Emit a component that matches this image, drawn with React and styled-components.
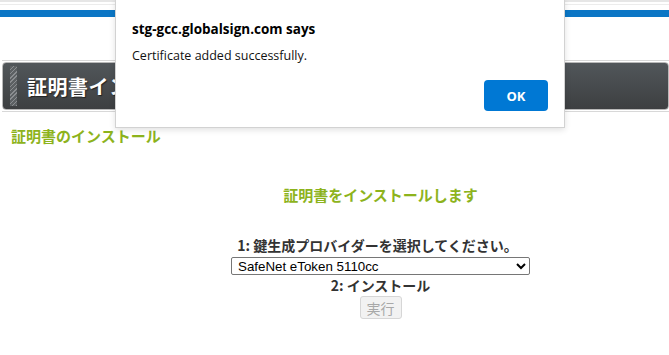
import React from "react";
import styled, { createGlobalStyle } from "styled-components";

const Global = createGlobalStyle`
  html, body { margin: 0; padding: 0; background: #fff; }
  body { font-family: "Noto Sans CJK JP", "Liberation Sans", sans-serif; }
`;

const Page = styled.div`
  position: relative;
  width: 669px;
  height: 355px;
  overflow: hidden;
  background: #fff;
`;

const TopStrip = styled.div`
  height: 2px;
  background: #e6e6e6;
  margin-bottom: 2px;
`;

const TopLine = styled.div`
  height: 1px;
  background: #ececec;
  margin-bottom: 5px;
`;

const BlueBar = styled.div`
  height: 7px;
  background: #0b76c5;
`;

const HeaderWrap = styled.div`
  margin: 43px 0 0 2px;
  border-top: 1px solid #d8d8d8;
  border-bottom: 1px solid #d8d8d8;
  padding: 1px 0;
`;

const HeaderBar = styled.div`
  display: flex;
  align-items: center;
  height: 46px;
  border-radius: 4px;
  border: 1px solid #b9b9b9;
  background: linear-gradient(#51565a, #3d3f41);
  padding-left: 7px;
  gap: 10px;
`;

const Stripe = styled.div`
  width: 7px;
  height: 40px;
  background: repeating-linear-gradient(
    -45deg,
    #8a8d90 0px,
    #8a8d90 1px,
    #5c6063 1px,
    #5c6063 3px
  );
`;

const HeaderTitle = styled.h1`
  margin: 0;
  color: #fff;
  font-size: 20px;
  font-weight: 700;
  letter-spacing: 0.5px;
  text-shadow: 1px 1px 1px #222;
`;

const SectionTitle = styled.h2`
  margin: 14px 0 0 11px;
  font-size: 15px;
  font-weight: 700;
  color: #8db31c;
  line-height: 20px;
`;

const Content = styled.div`
  display: flex;
  flex-direction: column;
  align-items: center;
  padding-left: 92px;
`;

const Lead = styled.h3`
  margin: 39px 0 0;
  font-size: 15px;
  font-weight: 700;
  color: #8db31c;
  line-height: 20px;
`;

const Step = styled.div`
  margin-top: ${(p) => p.$top || 0}px;
  font-size: 14px;
  font-weight: 700;
  color: #333;
  line-height: 16px;
  margin-left: ${(p) => p.$shift || 0}px;
`;

const Select = styled.select`
  width: 299px;
  height: 18px;
  margin-top: 4px;
  font-family: "Liberation Sans", Arial, sans-serif;
  font-size: 13.33px;
  color: #000;
  border: 1px solid #767676;
  border-radius: 2px;
  background: #fff;
  padding: 0 2px;
`;

const RunButton = styled.button`
  margin-top: 3px;
  width: 42px;
  height: 23px;
  padding: 0;
  font-family: "Noto Sans CJK JP", sans-serif;
  font-size: 14px;
  color: #a8a8a8;
  background: #f2f2f2;
  border: 1px solid #d6d6d6;
  border-radius: 3px;
`;

const Dialog = styled.div`
  position: absolute;
  left: 115px;
  top: -2px;
  width: 450px;
  height: 130px;
  background: #fff;
  border: 1px solid #d2d2d2;
  box-shadow: 0 2px 6px rgba(0, 0, 0, 0.12);
  box-sizing: border-box;
  padding: 20px 16px 0 16px;
  font-family: "Open Sans", "Noto Sans", sans-serif;
  display: flex;
  flex-direction: column;
`;

const DialogTitle = styled.div`
  font-size: 13.5px;
  font-weight: 700;
  color: #000;
  line-height: 20px;
`;

const DialogText = styled.div`
  margin-top: 7px;
  font-size: 12.5px;
  color: #111;
  line-height: 20px;
`;

const DialogActions = styled.div`
  display: flex;
  justify-content: flex-end;
  margin-top: 14px;
`;

const OkButton = styled.button`
  width: 64px;
  height: 31px;
  background: #0078d4;
  color: #fff;
  border: none;
  border-radius: 4px;
  font-family: "Open Sans", sans-serif;
  font-weight: 700;
  font-size: 13px;
`;

export default function App() {
  return (
    <Page>
      <Global />
      <TopStrip />
      <TopLine />
      <BlueBar />
      <HeaderWrap>
        <HeaderBar>
          <Stripe />
          <HeaderTitle>証明書インストール</HeaderTitle>
        </HeaderBar>
      </HeaderWrap>
      <SectionTitle>証明書のインストール</SectionTitle>
      <Content>
        <Lead>証明書をインストールします</Lead>
        <Step $top={32} $shift={-6}>1: 鍵生成プロバイダーを選択してください。</Step>
        <Select defaultValue="safenet">
          <option value="safenet">SafeNet eToken 5110cc</option>
        </Select>
        <Step $top={2}>2: インストール</Step>
        <RunButton disabled>実行</RunButton>
      </Content>
      <Dialog>
        <DialogTitle>stg-gcc.globalsign.com says</DialogTitle>
        <DialogText>Certificate added successfully.</DialogText>
        <DialogActions>
          <OkButton>OK</OkButton>
        </DialogActions>
      </Dialog>
    </Page>
  );
}
